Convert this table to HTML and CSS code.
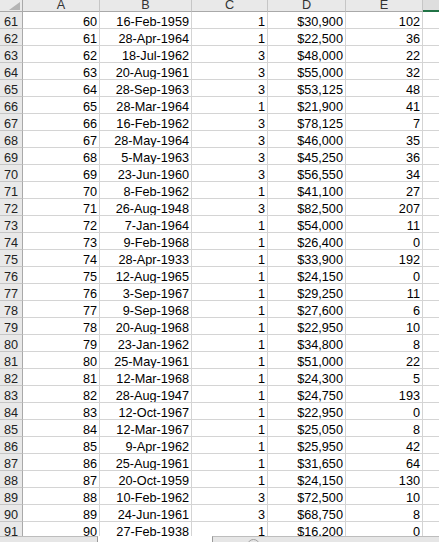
FILE: index.html
```html
<!DOCTYPE html>
<html>
<head>
<meta charset="utf-8">
<link rel="stylesheet" href="styles.css">
</head>
<body>
<div class="app">
<div class="sheet">
<div class="corner"><svg class="tri" width="11" height="8" viewBox="0 0 11 8"><polygon points="11,0 11,8 0,8" fill="#b4b4b4"/></svg></div>
<div class="h">A</div><div class="h">B</div><div class="h">C</div><div class="h">D</div><div class="h">E</div><div class="h sel"></div>

<div class="r">61</div><div class="c">60</div><div class="c">16-Feb-1959</div><div class="c">1</div><div class="c">$30,900</div><div class="c">102</div><div class="c e"></div>
<div class="r">62</div><div class="c">61</div><div class="c">28-Apr-1964</div><div class="c">1</div><div class="c">$22,500</div><div class="c">36</div><div class="c e"></div>
<div class="r">63</div><div class="c">62</div><div class="c">18-Jul-1962</div><div class="c">3</div><div class="c">$48,000</div><div class="c">22</div><div class="c e"></div>
<div class="r">64</div><div class="c">63</div><div class="c">20-Aug-1961</div><div class="c">3</div><div class="c">$55,000</div><div class="c">32</div><div class="c e"></div>
<div class="r">65</div><div class="c">64</div><div class="c">28-Sep-1963</div><div class="c">3</div><div class="c">$53,125</div><div class="c">48</div><div class="c e"></div>
<div class="r">66</div><div class="c">65</div><div class="c">28-Mar-1964</div><div class="c">1</div><div class="c">$21,900</div><div class="c">41</div><div class="c e"></div>
<div class="r">67</div><div class="c">66</div><div class="c">16-Feb-1962</div><div class="c">3</div><div class="c">$78,125</div><div class="c">7</div><div class="c e"></div>
<div class="r">68</div><div class="c">67</div><div class="c">28-May-1964</div><div class="c">3</div><div class="c">$46,000</div><div class="c">35</div><div class="c e"></div>
<div class="r">69</div><div class="c">68</div><div class="c">5-May-1963</div><div class="c">3</div><div class="c">$45,250</div><div class="c">36</div><div class="c e"></div>
<div class="r">70</div><div class="c">69</div><div class="c">23-Jun-1960</div><div class="c">3</div><div class="c">$56,550</div><div class="c">34</div><div class="c e"></div>
<div class="r">71</div><div class="c">70</div><div class="c">8-Feb-1962</div><div class="c">1</div><div class="c">$41,100</div><div class="c">27</div><div class="c e"></div>
<div class="r">72</div><div class="c">71</div><div class="c">26-Aug-1948</div><div class="c">3</div><div class="c">$82,500</div><div class="c">207</div><div class="c e"></div>
<div class="r">73</div><div class="c">72</div><div class="c">7-Jan-1964</div><div class="c">1</div><div class="c">$54,000</div><div class="c">11</div><div class="c e"></div>
<div class="r">74</div><div class="c">73</div><div class="c">9-Feb-1968</div><div class="c">1</div><div class="c">$26,400</div><div class="c">0</div><div class="c e"></div>
<div class="r">75</div><div class="c">74</div><div class="c">28-Apr-1933</div><div class="c">1</div><div class="c">$33,900</div><div class="c">192</div><div class="c e"></div>
<div class="r">76</div><div class="c">75</div><div class="c">12-Aug-1965</div><div class="c">1</div><div class="c">$24,150</div><div class="c">0</div><div class="c e"></div>
<div class="r">77</div><div class="c">76</div><div class="c">3-Sep-1967</div><div class="c">1</div><div class="c">$29,250</div><div class="c">11</div><div class="c e"></div>
<div class="r">78</div><div class="c">77</div><div class="c">9-Sep-1968</div><div class="c">1</div><div class="c">$27,600</div><div class="c">6</div><div class="c e"></div>
<div class="r">79</div><div class="c">78</div><div class="c">20-Aug-1968</div><div class="c">1</div><div class="c">$22,950</div><div class="c">10</div><div class="c e"></div>
<div class="r">80</div><div class="c">79</div><div class="c">23-Jan-1962</div><div class="c">1</div><div class="c">$34,800</div><div class="c">8</div><div class="c e"></div>
<div class="r">81</div><div class="c">80</div><div class="c">25-May-1961</div><div class="c">1</div><div class="c">$51,000</div><div class="c">22</div><div class="c e"></div>
<div class="r">82</div><div class="c">81</div><div class="c">12-Mar-1968</div><div class="c">1</div><div class="c">$24,300</div><div class="c">5</div><div class="c e"></div>
<div class="r">83</div><div class="c">82</div><div class="c">28-Aug-1947</div><div class="c">1</div><div class="c">$24,750</div><div class="c">193</div><div class="c e"></div>
<div class="r">84</div><div class="c">83</div><div class="c">12-Oct-1967</div><div class="c">1</div><div class="c">$22,950</div><div class="c">0</div><div class="c e"></div>
<div class="r">85</div><div class="c">84</div><div class="c">12-Mar-1967</div><div class="c">1</div><div class="c">$25,050</div><div class="c">8</div><div class="c e"></div>
<div class="r">86</div><div class="c">85</div><div class="c">9-Apr-1962</div><div class="c">1</div><div class="c">$25,950</div><div class="c">42</div><div class="c e"></div>
<div class="r">87</div><div class="c">86</div><div class="c">25-Aug-1961</div><div class="c">1</div><div class="c">$31,650</div><div class="c">64</div><div class="c e"></div>
<div class="r">88</div><div class="c">87</div><div class="c">20-Oct-1959</div><div class="c">1</div><div class="c">$24,150</div><div class="c">130</div><div class="c e"></div>
<div class="r">89</div><div class="c">88</div><div class="c">10-Feb-1962</div><div class="c">3</div><div class="c">$72,500</div><div class="c">10</div><div class="c e"></div>
<div class="r">90</div><div class="c">89</div><div class="c">24-Jun-1961</div><div class="c">3</div><div class="c">$68,750</div><div class="c">8</div><div class="c e"></div>
<div class="r">91</div><div class="c">90</div><div class="c">27-Feb-1938</div><div class="c">1</div><div class="c">$16,200</div><div class="c">0</div><div class="c e"></div>
</div>
<div class="tabs">
<div class="nav"></div>
<div class="tab"></div>
<div class="scroll"><span class="plus"></span></div>
</div>
</div>
</body>
</html>
```

FILE: styles.css
```css
html, body {
  margin: 0;
  padding: 0;
  background: #ffffff;
  overflow: hidden;
}

.app {
  width: 439px;
  height: 542px;
  display: flex;
  flex-direction: column;
  overflow: hidden;
}

.sheet {
  height: 536px;
  overflow: hidden;
  display: grid;
  grid-template-columns: 23px 77px 92px 76px 78px 77px 1fr;
  grid-template-rows: 12px;
  grid-auto-rows: 17px;
  font-family: "Liberation Sans", Arial, sans-serif;
  font-size: 12.7px;
  color: #000;
}

.sheet > div {
  box-sizing: border-box;
  overflow: hidden;
  white-space: nowrap;
}

.corner {
  background: #e9e9e9;
  border-right: 1px solid #a9a9a9;
  border-bottom: 1px solid #a9a9a9;
  position: relative;
}

.tri {
  position: absolute;
  right: 2px;
  bottom: 1px;
}

.h {
  background: #e9e9e9;
  border-right: 1px solid #c6c6c6;
  border-bottom: 1px solid #a9a9a9;
  text-align: center;
  line-height: 11px;
  color: #333;
}

.h.sel {
  background: #dedede;
  border-bottom: 2px solid #217346;
  border-right: none;
}

.r {
  background: #e9e9e9;
  border-right: 1px solid #a9a9a9;
  border-bottom: 1px solid #c6c6c6;
  text-align: center;
  line-height: 20px;
  color: #222;
}

.c {
  border-right: 1px solid #d4d4d4;
  border-bottom: 1px solid #d4d4d4;
  text-align: right;
  padding-right: 2px;
  line-height: 20px;
}

.c.e {
  border-right: none;
}

.tabs {
  height: 6px;
  display: flex;
}

.nav {
  width: 98px;
  box-sizing: border-box;
  background: #e6e6e6;
  border-top: 1px solid #bdbdbd;
  border-right: 1px solid #9a9a9a;
}

.tab {
  width: 114px;
  background: #ffffff;
}

.scroll {
  flex: 1;
  box-sizing: border-box;
  background: #e6e6e6;
  border-top: 1px solid #bdbdbd;
  border-left: 1px solid #9a9a9a;
  padding-left: 34px;
  padding-top: 2px;
  overflow: hidden;
}

.plus {
  display: block;
  width: 13px;
  height: 13px;
  box-sizing: border-box;
  border: 1px solid #a0a0a0;
  border-radius: 50%;
}
```
